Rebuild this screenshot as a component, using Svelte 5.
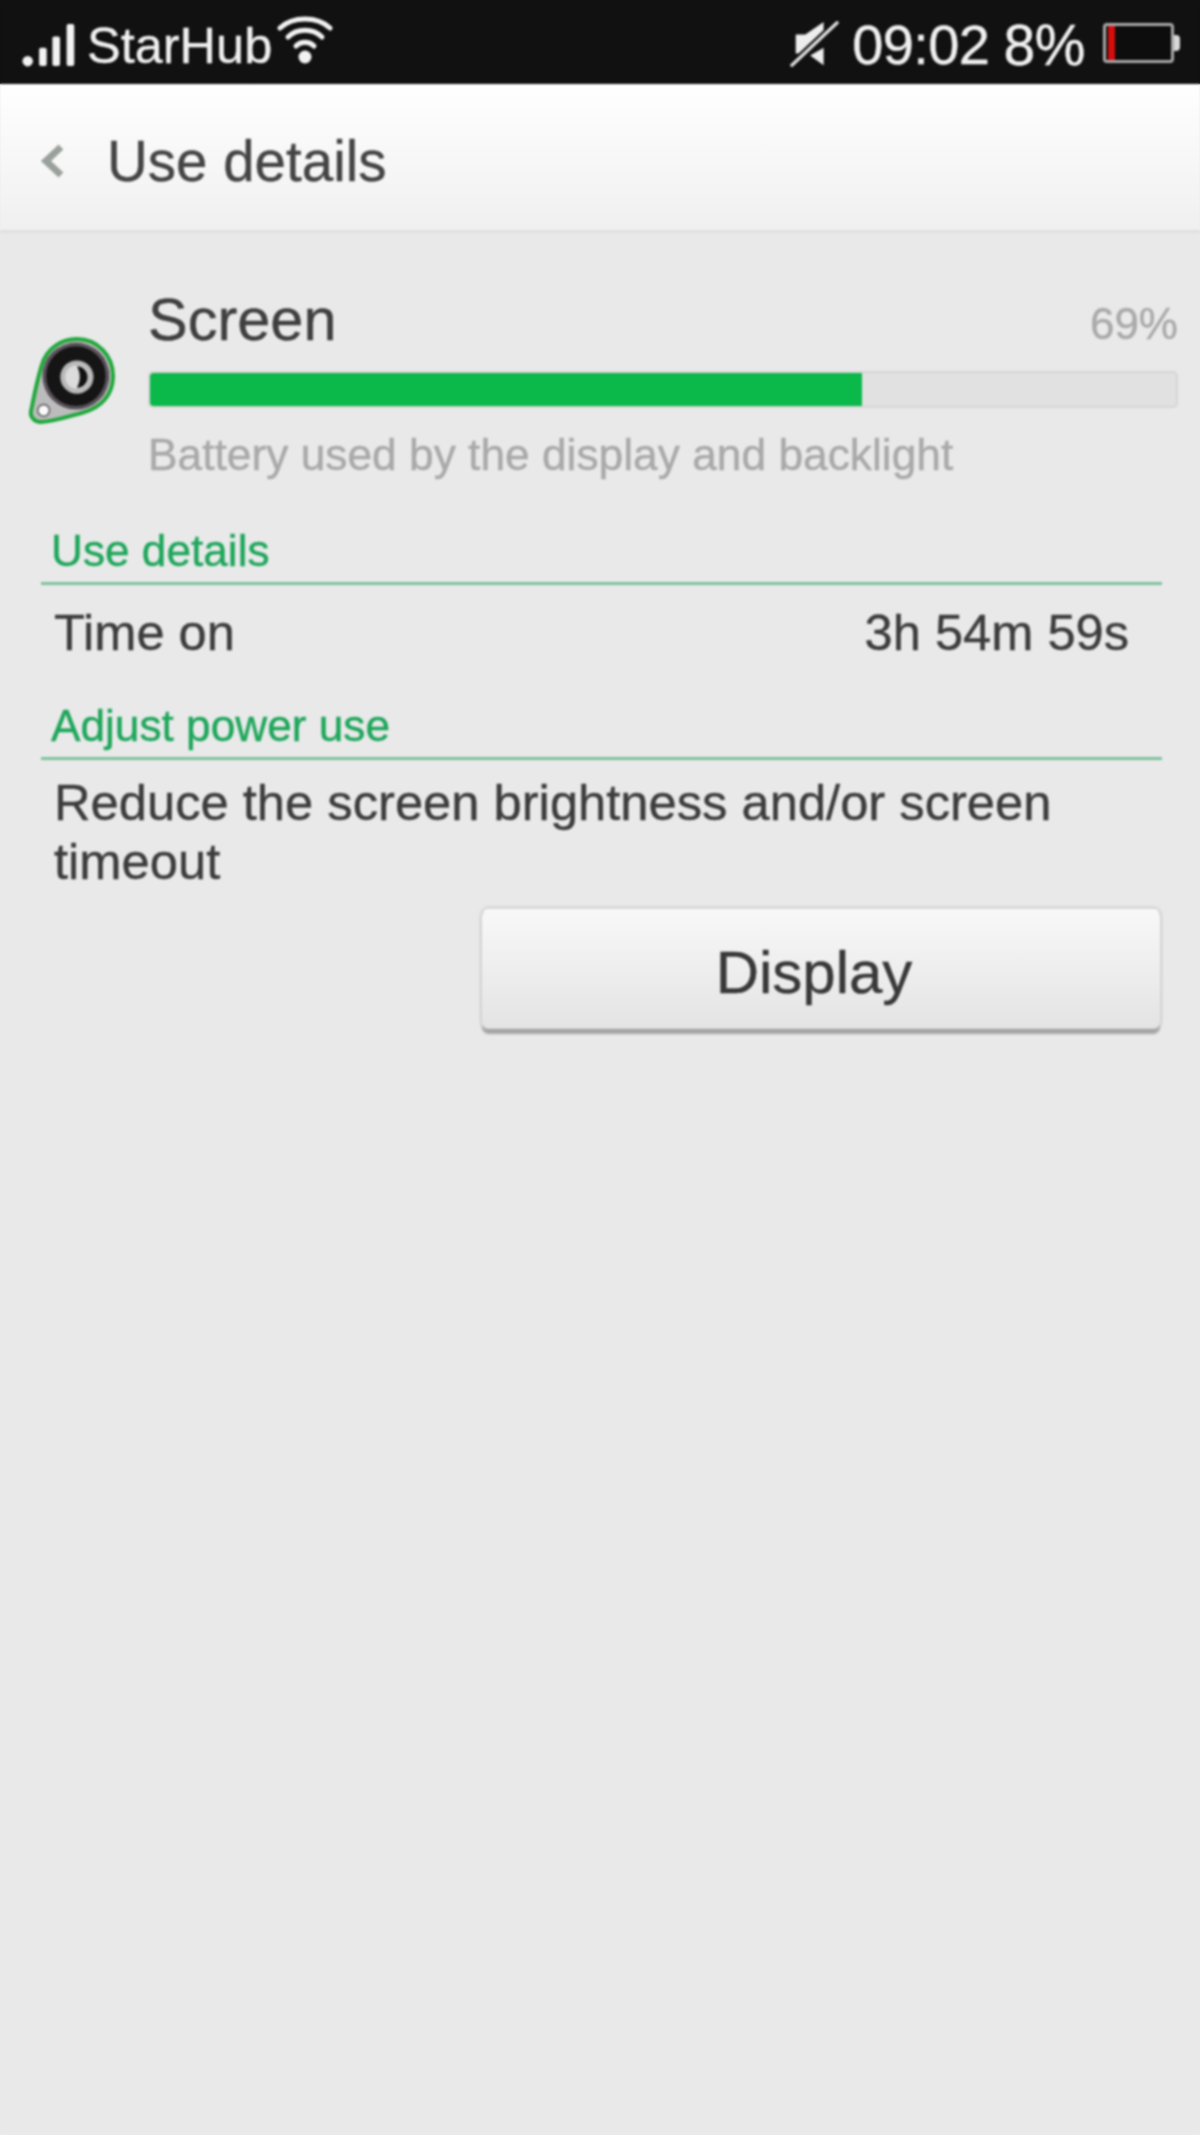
<script>
	const usedPercent = 69.4;
</script>

<div class="phone">
	<header class="status">
		<div class="status-left">
			<svg class="signal" viewBox="0 0 60 46" width="57" height="44" aria-hidden="true">
				<circle cx="6" cy="40" r="5.5" fill="#f2f2f2" />
				<rect x="18" y="26" width="8" height="19" rx="2" fill="#f2f2f2" />
				<rect x="32" y="14" width="8" height="31" rx="2" fill="#f2f2f2" />
				<rect x="47" y="1" width="8" height="44" rx="2" fill="#f2f2f2" />
			</svg>
			<span class="carrier">StarHub</span>
			<svg class="wifi" viewBox="0 0 56 50" width="56" height="50" aria-hidden="true">
				<g fill="none" stroke="#f2f2f2" stroke-width="5" stroke-linecap="round">
					<path d="M3 13 C16 1 40 1 53 13" />
					<path d="M11 22 C20 13 36 13 45 22" />
					<path d="M19 31 C24 26 32 26 37 31" />
				</g>
				<circle cx="28" cy="42" r="6.5" fill="#f2f2f2" />
			</svg>
		</div>
		<div class="status-right">
			<svg class="mute" viewBox="0 0 52 52" width="50" height="50" aria-hidden="true">
				<path d="M7 16 H17 L36 3 V15 L13 36 H7 Z" fill="#eee" />
				<path d="M36 30 V48 L22 38 Z" fill="#eee" />
				<path d="M3 48 L50 4" stroke="#111" stroke-width="8" />
				<path d="M3 48 L50 4" stroke="#ddd" stroke-width="3.5" stroke-linecap="round" />
			</svg>
			<span class="clock">09:02</span>
			<span class="level">8%</span>
			<div class="battery">
				<div class="battery-fill"></div>
			</div>
		</div>
	</header>

	<nav class="titlebar">
		<svg class="back" viewBox="0 0 26 36" width="26" height="36" aria-hidden="true">
			<path d="M21 4 L6 18 L21 32" fill="none" stroke="#9aa09c" stroke-width="7" />
		</svg>
		<h1>Use details</h1>
	</nav>

	<main class="content">
		<section class="summary">
			<svg class="app-icon" viewBox="0 0 90 92" width="88" height="90" aria-hidden="true">
				<path d="M13 88 C7 88 2 83 3 77 C6 62 9 46 14 30 C19 12 35 3 50 3 C71 3 87 20 87 41 C87 60 75 73 57 78 C42 82 28 87 13 88 Z" fill="#bcbcbc" stroke="#1fa83a" stroke-width="4" />
				<circle cx="49" cy="41" r="34" fill="#151515" />
				<circle cx="49" cy="41" r="32" fill="none" stroke="#5f555f" stroke-width="3" />
				<circle cx="50" cy="42" r="17" fill="#b9b9b9" />
				<circle cx="50" cy="42" r="12" fill="#dcdcdc" />
				<path d="M50 31 A11 11 0 0 1 50 53 C54 46 54 38 50 31 Z" fill="#111" />
				<circle cx="16" cy="76" r="6" fill="#fafafa" stroke="#555" stroke-width="1.5" />
			</svg>
			<div class="summary-body">
				<div class="summary-head">
					<span class="app-name">Screen</span>
					<span class="percent">69%</span>
				</div>
				<div class="bar">
					<div class="bar-fill" style="width: {usedPercent}%"></div>
				</div>
				<p class="hint">Battery used by the display and backlight</p>
			</div>
		</section>

		<section class="group first">
			<h2>Use details</h2>
			<div class="row">
				<span>Time on</span>
				<span>3h 54m 59s</span>
			</div>
		</section>

		<section class="group second">
			<h2>Adjust power use</h2>
			<p class="advice">Reduce the screen brightness and/or screen timeout</p>
			<div class="actions">
				<button type="button">Display</button>
			</div>
		</section>
	</main>
</div>

<style>
	:global(body) {
		margin: 0;
		background: linear-gradient(#111 84px, #e9e9ea 84px);
	}

	.phone {
		width: 1200px;
		height: 2135px;
		overflow: hidden;
		display: flex;
		flex-direction: column;
		font-family: 'Liberation Sans', Arial, sans-serif;
		color: #3c3c3c;
		background: #e9e9ea;
		/* source screenshot is an upscaled, soft capture */
		filter: blur(0.8px);
		-webkit-text-stroke: 0.4px currentColor;
	}

	.status {
		height: 84px;
		box-sizing: border-box;
		flex: none;
		display: flex;
		justify-content: space-between;
		align-items: center;
		padding: 8px 0 0 22px;
		background: #111;
		color: #f0f0f0;
	}

	.status-left,
	.status-right {
		display: flex;
		align-items: center;
	}

	.signal {
		margin-right: 8px;
		margin-top: -3px;
	}

	.carrier {
		font-size: 50.5px;
		margin-top: -2px;
	}

	.wifi {
		margin-left: 5px;
		margin-top: -12px;
	}

	.mute {
		margin-right: 13px;
		margin-top: -4px;
	}

	.clock {
		font-size: 56px;
		letter-spacing: -0.6px;
		margin-top: -3px;
	}

	.level {
		font-size: 57px;
		letter-spacing: -0.4px;
		margin-left: 14px;
		margin-top: -3px;
	}

	.battery {
		position: relative;
		width: 71px;
		height: 40px;
		box-sizing: border-box;
		margin-left: 18px;
		margin-right: 26px;
		margin-top: -6px;
		border: 3px solid #a8a8a8;
		border-radius: 4px;
		background: #0d0d0d;
	}

	.battery::after {
		content: '';
		position: absolute;
		right: -9px;
		top: 9px;
		width: 6px;
		height: 16px;
		background: #d8d8d8;
		border-radius: 0 4px 4px 0;
	}

	.battery-fill {
		width: 7px;
		height: 100%;
		margin-left: 2px;
		background: #d40d0d;
	}

	.titlebar {
		height: 149px;
		box-sizing: border-box;
		flex: none;
		display: flex;
		align-items: center;
		padding: 8px 0 0 40px;
		background: linear-gradient(#ffffff, #f0f0f0);
		border-bottom: 3px solid #e0e0e0;
	}

	.back {
		margin-right: 41px;
	}

	h1 {
		margin: 0;
		font-size: 56.5px;
		font-weight: 400;
		color: #444;
	}

	.content {
		padding: 0 22px 0 28px;
	}

	.summary {
		display: flex;
		align-items: flex-start;
		padding-top: 44px;
	}

	.app-icon {
		flex: none;
		margin-top: 59px;
		margin-right: 32px;
	}

	.summary-body {
		flex: 1;
		min-width: 0;
	}

	.summary-head {
		display: flex;
		justify-content: space-between;
		align-items: flex-end;
		height: 78px;
	}

	.app-name {
		font-size: 59.5px;
		line-height: 70px;
		color: #3f3f3f;
	}

	.percent {
		font-size: 44px;
		line-height: 62px;
		color: #aaa;
	}

	.bar {
		height: 37px;
		box-sizing: border-box;
		margin-top: 16px;
		background: #e1e1e1;
		border: 2px solid #d6d6d6;
		border-radius: 5px;
		overflow: hidden;
	}

	.bar-fill {
		height: 100%;
		background: #0bb84a;
		border-radius: 3px 0 0 3px;
	}

	.hint {
		margin: 22px 0 0;
		font-size: 44.3px;
		line-height: 50px;
		color: #a9a9a9;
	}

	.group {
		margin: 0 0 0 13px;
		width: 1121px;
	}

	.group.first {
		margin-top: 45px;
	}

	.group.second {
		margin-top: 38px;
	}

	h2 {
		margin: 0;
		padding: 0 0 5px 10px;
		font-size: 44.2px;
		line-height: 52px;
		font-weight: 400;
		color: #1ea65a;
		border-bottom: 3px solid #80c29c;
	}

	.row {
		display: flex;
		justify-content: space-between;
		padding: 19px 33px 0 13px;
		font-size: 50.6px;
		line-height: 58px;
	}

	.advice {
		margin: 13px 0 0;
		padding: 0 20px 0 13px;
		font-size: 50.7px;
		line-height: 59px;
	}

	.actions {
		display: flex;
		justify-content: flex-end;
		margin-top: 18px;
	}

	button {
		width: 680px;
		height: 120px;
		margin-right: 1px;
		padding: 6px 14px 0 0;
		font: inherit;
		font-size: 60px;
		color: #383838;
		background: linear-gradient(#f8f8f8, #e4e4e4);
		border: 1px solid #d4d4d4;
		border-top-color: #fff;
		border-radius: 8px;
		box-shadow:
			0 6px 2px -1px #a4a4a4,
			0 0 3px #bdbdbd,
			0 -3px 3px #dcdcdc;
	}
</style>
